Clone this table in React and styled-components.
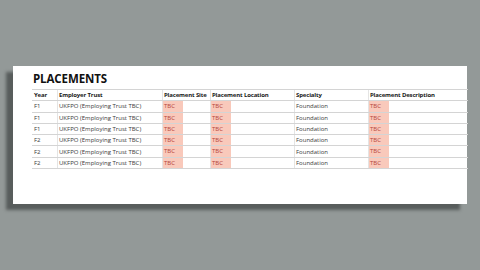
import styled, { createGlobalStyle } from "styled-components";

const GlobalStyle = createGlobalStyle`
  html, body {
    margin: 0;
    padding: 0;
    width: 480px;
    height: 270px;
    overflow: hidden;
    background: #939998;
    font-family: "Open Sans", "Noto Sans", sans-serif;
  }
`;

const Stage = styled.div`
  width: 480px;
  height: 270px;
  padding: 66px 13px 0 13px;
  box-sizing: border-box;
`;

const Sheet = styled.div`
  width: 454px;
  height: 138px;
  background: #ffffff;
  box-shadow: -7px 6px 3px rgba(40, 44, 44, 0.55);
  padding: 6px 0 0 19px;
  box-sizing: border-box;
`;

const Title = styled.h1`
  margin: 0 0 3px 1px;
  font-size: 11.5px;
  line-height: 14px;
  font-weight: 700;
  color: #111;
  letter-spacing: -0.1px;
`;

const Table = styled.table`
  border-collapse: collapse;
  width: 435px;
  table-layout: fixed;
  font-size: 6px;
`;

const Cell = styled.td`
  height: 10.3px;
  padding: 0 0 0 1px;
  border-top: 1px solid #d4d4d4;
  border-bottom: 1px solid #d4d4d4;
  border-left: 1px solid ${(p) => (p.$first ? "transparent" : "#e4e4e4")};
  color: ${(p) => (p.$head ? "#1a1a1a" : "#3a3a3a")};
  font-weight: ${(p) => (p.$head ? 700 : 400)};
  letter-spacing: ${(p) => (p.$head ? "-0.15px" : "0")};
  text-align: left;
  white-space: nowrap;
  overflow: hidden;
  line-height: 10px;
  vertical-align: middle;
`;

const Tbc = styled.span`
  display: block;
  width: 19px;
  height: 10.3px;
  margin-left: -1px;
  padding-left: 1px;
  background: #f9c9bb;
  color: #b5443a;
`;

const cols = [25, 105, 48, 84, 74, 99];
const heads = [
  "Year",
  "Employer Trust",
  "Placement Site",
  "Placement Location",
  "Specialty",
  "Placement Description",
];
const rows = ["F1", "F1", "F1", "F2", "F2", "F2"];

export default function App() {
  return (
    <>
      <GlobalStyle />
      <Stage>
        <Sheet>
          <Title>PLACEMENTS</Title>
          <Table>
            <colgroup>
              {cols.map((w, i) => (
                <col key={i} style={{ width: w }} />
              ))}
            </colgroup>
            <thead>
              <tr>
                {heads.map((h, i) => (
                  <Cell as="th" key={h} $head $first={i === 0}>
                    {h}
                  </Cell>
                ))}
              </tr>
            </thead>
            <tbody>
              {rows.map((y, i) => (
                <tr key={i}>
                  <Cell $first>{y}</Cell>
                  <Cell>UKFPO (Employing Trust TBC)</Cell>
                  <Cell>
                    <Tbc>TBC</Tbc>
                  </Cell>
                  <Cell>
                    <Tbc>TBC</Tbc>
                  </Cell>
                  <Cell>Foundation</Cell>
                  <Cell>
                    <Tbc>TBC</Tbc>
                  </Cell>
                </tr>
              ))}
            </tbody>
          </Table>
        </Sheet>
      </Stage>
    </>
  );
}
